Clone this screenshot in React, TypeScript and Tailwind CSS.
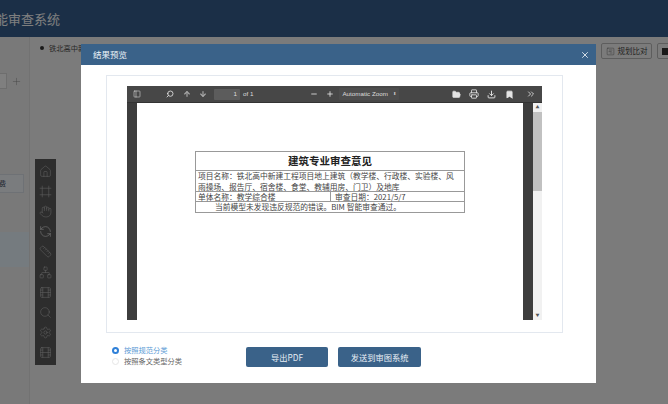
import {
  ArrowDown,
  ArrowUp,
  Bookmark,
  ChevronsRight,
  Download,
  Film,
  FolderOpen,
  Frame,
  Hand,
  Home,
  Minus,
  Network,
  PanelLeft,
  Plus,
  Printer,
  RefreshCcw,
  Ruler,
  Search,
  Settings,
  SquareChartGantt,
  X,
} from "lucide-react";

const cjk = "font-['Noto_Sans_CJK_SC','Liberation_Sans',sans-serif]";

const sideTools = [
  { icon: Home, active: false },
  { icon: Frame, active: false },
  { icon: Hand, active: false },
  { icon: RefreshCcw, active: true },
  { icon: Ruler, active: false },
  { icon: Network, active: false },
  { icon: Film, active: false },
  { icon: Search, active: false },
  { icon: Settings, active: false },
  { icon: Film, active: false },
];

function BackgroundPage() {
  return (
    <div className="flex h-full w-full flex-col bg-[#f7f7f7]">
      <header className="flex h-[37px] shrink-0 items-center overflow-hidden bg-[#365e8e]">
        <h1 className="ml-[-18px] text-[13px] whitespace-nowrap text-white">智能审查系统</h1>
      </header>
      <div className="flex min-h-0 flex-1">
        <aside className="flex w-[30px] shrink-0 flex-col border-r border-[#e4e4e4] bg-[#f2f2f2]">
          <div className="mt-[35px] flex h-[18px] items-center">
            <div className="h-[16px] w-[7px] border border-l-0 border-[#dcdcdc] bg-white" />
            <Plus size={11} strokeWidth={1} className="ml-[4px] text-[#888]" />
          </div>
          <div className="mt-[84px] flex h-[19px] w-[24px] items-center border-y border-r border-[#dde3ea] bg-[#f5f8fc]">
            <span className="ml-[-1px] text-[7px] text-[#345]">费</span>
          </div>
          <div className="mt-[39px] h-[35px] bg-[#eaf6ff]" />
        </aside>
        <div className="flex min-w-0 flex-1 items-start justify-between pt-[6px]">
          <div className="ml-[10px] flex items-center gap-[5px] text-[7.25px] text-[#555]">
            <span className="size-[4px] rounded-full bg-[#333]" />
            <span className="w-[32px] overflow-hidden whitespace-nowrap">铁北高中新</span>
          </div>
          <div className="mr-[-40px] flex shrink-0 gap-[5px]">
            <button className="flex h-[16px] w-[51px] items-center justify-center gap-[3px] rounded-[2px] border border-[#bbb] text-[7.5px] whitespace-nowrap text-[#444]">
              <SquareChartGantt size={9} strokeWidth={1} />
              规划比对
            </button>
            <button className="flex h-[16px] w-[51px] items-center rounded-[2px] border border-[#bbb] pl-[4px] text-[#333]">
              <span className="size-[7px] bg-[#333]" />
            </button>
          </div>
        </div>
      </div>
    </div>
  );
}

function PdfToolbar() {
  const iconClass = "shrink-0 text-[#e4e4e4]";
  return (
    <div className="flex h-[17px] shrink-0 items-center border-b border-[#333] bg-[#474747] text-[6.25px] whitespace-nowrap text-[#dcdcdc] font-['Liberation_Sans',sans-serif]">
      <PanelLeft size={8} strokeWidth={1.6} className={`${iconClass} ml-[6px]`} />
      <Search size={8} strokeWidth={2.5} className={`${iconClass} ml-[25px] -scale-x-100`} />
      <ArrowUp size={8} strokeWidth={3.5} className="ml-[9px] shrink-0 text-[#a8a8a8]" />
      <ArrowDown size={8} strokeWidth={3.5} className="ml-[8px] shrink-0 text-[#a8a8a8]" />
      <div className="ml-[7px] flex h-[11px] w-[26px] items-center justify-end rounded-[1px] bg-[#5c5c5c] pr-[3px]">1</div>
      <span className="ml-[3px]">of 1</span>
      <Minus size={8} strokeWidth={2.5} className={`${iconClass} ml-[57px]`} />
      <Plus size={8} strokeWidth={2.5} className={`${iconClass} ml-[8px]`} />
      <div className="ml-[5px] flex h-[12px] w-[60px] items-center justify-between rounded-[1px] bg-[#4d4d4d] px-[3px]">
        <span>Automatic Zoom</span>
        <span className="text-[4px]">⬍</span>
      </div>
      <FolderOpen size={9} fill="currentColor" strokeWidth={1.5} className={`${iconClass} ml-[53px]`} />
      <Printer size={10} strokeWidth={2} className={`${iconClass} ml-[8px]`} />
      <Download size={9} strokeWidth={2.5} className={`${iconClass} ml-[8px]`} />
      <Bookmark size={9} fill="currentColor" className={`${iconClass} ml-[9px]`} />
      <ChevronsRight size={10} strokeWidth={2} className={`${iconClass} ml-[12px]`} />
    </div>
  );
}

function ReviewSheet() {
  return (
    <div className="mx-[58px] mt-[48px] border border-[#999] text-[7.75px] leading-[10px] text-[#444]">
      <div className="flex h-[19px] items-center justify-center border-b border-[#999] text-[10.5px] font-bold text-[#222]">
        建筑专业审查意见
      </div>
      <div className="h-[21px] border-b border-[#999] pr-[8px] pl-[2px] leading-[10.5px]">
        项目名称：铁北高中新建工程项目地上建筑（教学楼、行政楼、实验楼、风雨操场、报告厅、宿舍楼、食堂、教辅用房、门卫）及地库
      </div>
      <div className="flex h-[10px] border-b border-[#999]">
        <div className="w-[135px] border-r border-[#999] px-[2px]">单体名称：教学综合楼</div>
        <div className="px-[4px]">审查日期：2021/5/7</div>
      </div>
      <div className="h-[10px] pl-[19px]">当前模型未发现违反规范的错误。BIM 智能审查通过。</div>
    </div>
  );
}

function PdfViewer() {
  return (
    <div className="flex h-[234px] w-[415px] flex-col">
      <PdfToolbar />
      <div className="flex min-h-0 flex-1 bg-[#3d3d3d]">
        <div className="ml-[10px] w-[386px] overflow-hidden bg-white">
          <ReviewSheet />
        </div>
        <div className="ml-auto flex w-[9px] flex-col items-center bg-[#f1f1f1]">
          <span className="mt-[2px] text-[4px] leading-[5px] text-[#555]">▲</span>
          <div className="mt-[2px] h-[79px] w-full bg-[#c1c1c1]" />
          <span className="mt-auto mb-[2px] text-[4px] leading-[5px] text-[#555]">▼</span>
        </div>
      </div>
    </div>
  );
}

function ResultDialog() {
  return (
    <div className="absolute top-[44px] left-[81px] flex h-[339px] w-[515px] flex-col bg-white">
      <div className="flex h-[21px] shrink-0 items-center justify-between bg-[#3a6289] pr-[6px] pl-[12px] text-[8.5px] text-[#eef3f8]">
        结果预览
        <X size={10} strokeWidth={2} />
      </div>
      <div className="mt-[10px] ml-[25px] h-[258px] w-[457px] border border-[#e3e8ef] pt-[10px] pl-[20px]">
        <PdfViewer />
      </div>
      <div className="mt-[14px] ml-[31px] flex items-start">
        <div className="mt-[-1px] flex w-[134px] flex-col gap-[2px] text-[7.25px] leading-[9px]">
          <label className="flex items-center gap-[5px] text-[#5b9bd5]">
            <span className="flex size-[7px] items-center justify-center rounded-full bg-[#2f80d8]">
              <span className="size-[3px] rounded-full bg-white" />
            </span>
            按照规范分类
          </label>
          <label className="flex items-center gap-[5px] text-[#666]">
            <span className="size-[7px] rounded-full border border-[#e6e6e6]" />
            按照条文类型分类
          </label>
        </div>
        <button className="h-[20px] w-[82px] rounded-[2px] bg-[#3a6289] text-[8.25px] text-[#e8eef5]">导出PDF</button>
        <button className="ml-[10px] h-[20px] w-[83px] rounded-[2px] bg-[#3a6289] text-[8.25px] text-[#e8eef5]">发送到审图系统</button>
      </div>
    </div>
  );
}

export default function App() {
  return (
    <div className={`relative h-[404px] w-full overflow-hidden ${cjk}`}>
      <BackgroundPage />
      {/* floating model tools */}
      <div className="absolute top-[159px] left-[35px] flex h-[206px] w-[21px] flex-col items-center justify-around bg-[#5a5a5a] py-[2px]">
        {sideTools.map((tool, i) => (
          <tool.icon key={i} size={13} strokeWidth={1} className={tool.active ? "text-white" : "text-[#c4c4c4]"} />
        ))}
      </div>
      <div className="absolute inset-0 bg-black/50" />
      <ResultDialog />
    </div>
  );
}
